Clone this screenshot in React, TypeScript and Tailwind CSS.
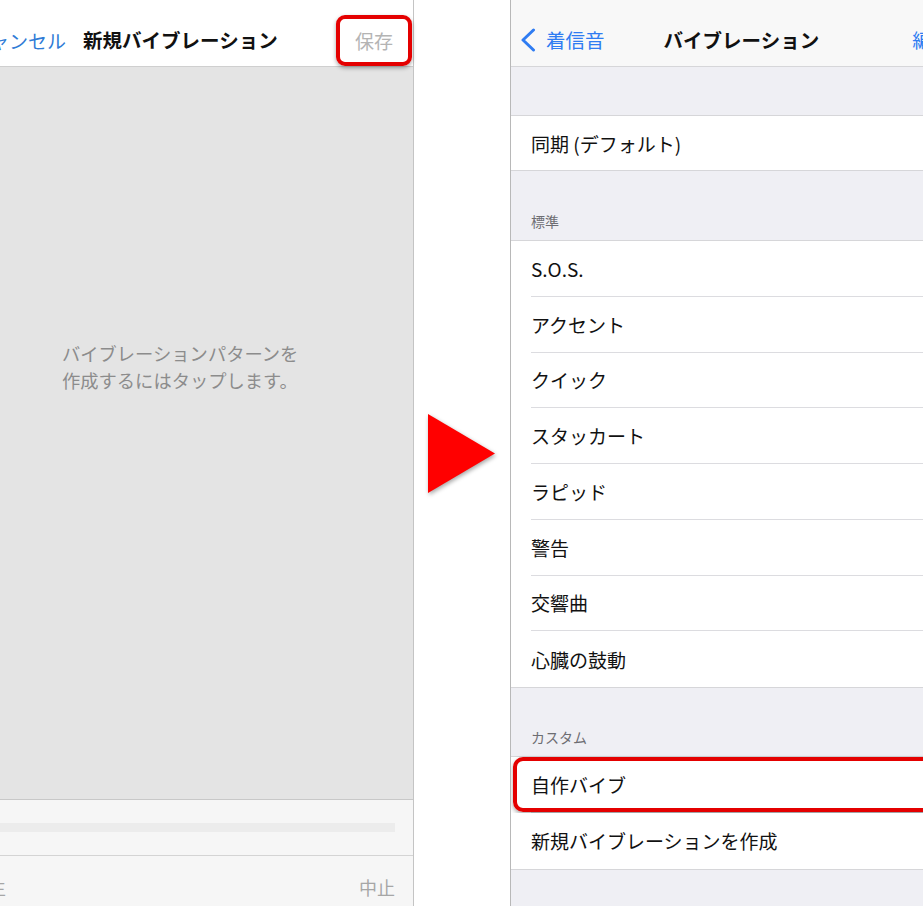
const font = {
  fontFamily: '"Noto Sans CJK JP", "Noto Sans", sans-serif',
};

const standardRows = [
  "S.O.S.",
  "アクセント",
  "クイック",
  "スタッカート",
  "ラピッド",
  "警告",
  "交響曲",
  "心臓の鼓動",
];

function ListRow({
  label,
  last,
  highlight,
}: {
  label: string;
  last?: boolean;
  highlight?: boolean;
}) {
  return (
    <div className="relative h-[55.75px] bg-white pl-[20px]">
      <div
        className={`flex h-full items-center text-[19px] leading-none text-[#111] ${
          last ? "" : "border-b border-[#dcdce0]"
        }`}
      >
        {label}
      </div>
      {highlight && (
        <div className="absolute top-[0px] bottom-[1px] left-[2px] right-[-20px] rounded-[10px] border-[4px] border-[#e40000] shadow-[0_2px_4px_rgba(0,0,0,0.35)]" />
      )}
    </div>
  );
}

function SectionHeader({ title, h }: { title: string; h: string }) {
  return (
    <div
      className={`flex shrink-0 items-end px-[20px] pb-[11px] text-[14px] leading-[16px] text-[#6d6d72] ${h}`}
    >
      {title}
    </div>
  );
}

function EditorPanel() {
  return (
    <div className="flex h-full w-[414px] shrink-0 flex-col border-r border-[#c4c4c4] bg-white">
      <div className="relative flex h-[67px] shrink-0 items-center border-b border-[#cfcfcf] bg-white pt-[14px]">
        <span className="ml-[-29px] shrink-0 whitespace-nowrap text-[19px] leading-none text-[#2f7bd6]">
          キャンセル
        </span>
        <span className="ml-[17px] shrink-0 whitespace-nowrap text-[19.5px] font-bold leading-none text-[#111]">
          新規バイブレーション
        </span>
        <span className="ml-auto mr-[20px] shrink-0 text-[19px] leading-none text-[#b4b4b4]">
          保存
        </span>
        <div className="absolute top-[15px] left-[336px] h-[51px] w-[76px] rounded-[9px] border-[4px] border-[#e40000] shadow-[0_2px_4px_rgba(0,0,0,0.35)]" />
      </div>
      <div className="flex-1 bg-[#e4e4e4] pt-[273px] pl-[62px]">
        <p className="text-[18.3px] leading-[27px] text-[#8c8c8c]">
          バイブレーションパターンを
          <br />
          作成するにはタップします。
        </p>
      </div>
      <div className="shrink-0 border-t border-[#c8c8c8] bg-[#f6f6f6]">
        <div className="flex h-[56px] items-center border-b border-[#d4d4d4] pr-[18px]">
          <div className="h-[9px] w-[395px] bg-[#ececec]" />
        </div>
        <div className="flex h-[50px] items-center pt-[12px] pr-[18px]">
          <span className="ml-[-30px] shrink-0 text-[18px] leading-none text-[#a6a6a6]">
            再生
          </span>
          <span className="ml-auto shrink-0 text-[18px] leading-none text-[#a6a6a6]">
            中止
          </span>
        </div>
      </div>
    </div>
  );
}

function Arrow() {
  return (
    <div className="flex w-[96px] shrink-0 items-center bg-white pl-[14px]">
      <svg
        width="68"
        height="79"
        viewBox="0 0 68 79"
        className="drop-shadow-[1px_2px_2px_rgba(0,0,0,0.35)]"
      >
        <polygon points="0,0 67,39.5 0,79" fill="#ff0000" />
      </svg>
    </div>
  );
}

function ListPanel() {
  return (
    <div className="flex h-full min-w-0 flex-1 flex-col overflow-hidden border-l border-[#b8b8b8] bg-[#efeff4]">
      <div className="flex h-[67px] shrink-0 items-center whitespace-nowrap border-b border-[#d6d6d9] bg-[#f8f8f8] pt-[14px]">
        <svg
          width="16"
          height="24"
          viewBox="0 0 16 24"
          className="ml-[9px] shrink-0"
        >
          <path
            d="M13.5 2 L3 12 L13.5 22"
            fill="none"
            stroke="#2f7cf2"
            strokeWidth="3"
            strokeLinecap="round"
            strokeLinejoin="round"
          />
        </svg>
        <span className="ml-[10px] shrink-0 text-[19.5px] leading-none text-[#2f7cf2]">
          着信音
        </span>
        <span className="ml-[59px] shrink-0 text-[19.5px] font-bold leading-none text-[#111]">
          バイブレーション
        </span>
        <span className="ml-[93px] shrink-0 text-[19.5px] leading-none text-[#2f7cf2]">
          編集
        </span>
      </div>
      <div className="h-[48px] shrink-0" />
      <div className="shrink-0 border-y border-[#d6d6d9] bg-white pl-[20px]">
        <div className="flex h-[54px] items-center text-[19px] leading-none text-[#111]">
          同期 (デフォルト)
        </div>
      </div>
      <SectionHeader title="標準" h="h-[69px]" />
      <div className="shrink-0 border-y border-[#d6d6d9]">
        {standardRows.map((label, i) => (
          <ListRow
            key={label}
            label={label}
            last={i === standardRows.length - 1}
          />
        ))}
      </div>
      <SectionHeader title="カスタム" h="h-[68px]" />
      <div className="shrink-0 border-y border-[#d6d6d9]">
        <ListRow label="自作バイブ" highlight />
        <ListRow label="新規バイブレーションを作成" last />
      </div>
    </div>
  );
}

export default function App() {
  return (
    <div
      className="flex h-[906px] w-[923px] overflow-hidden bg-white"
      style={font}
    >
      <EditorPanel />
      <Arrow />
      <ListPanel />
    </div>
  );
}
